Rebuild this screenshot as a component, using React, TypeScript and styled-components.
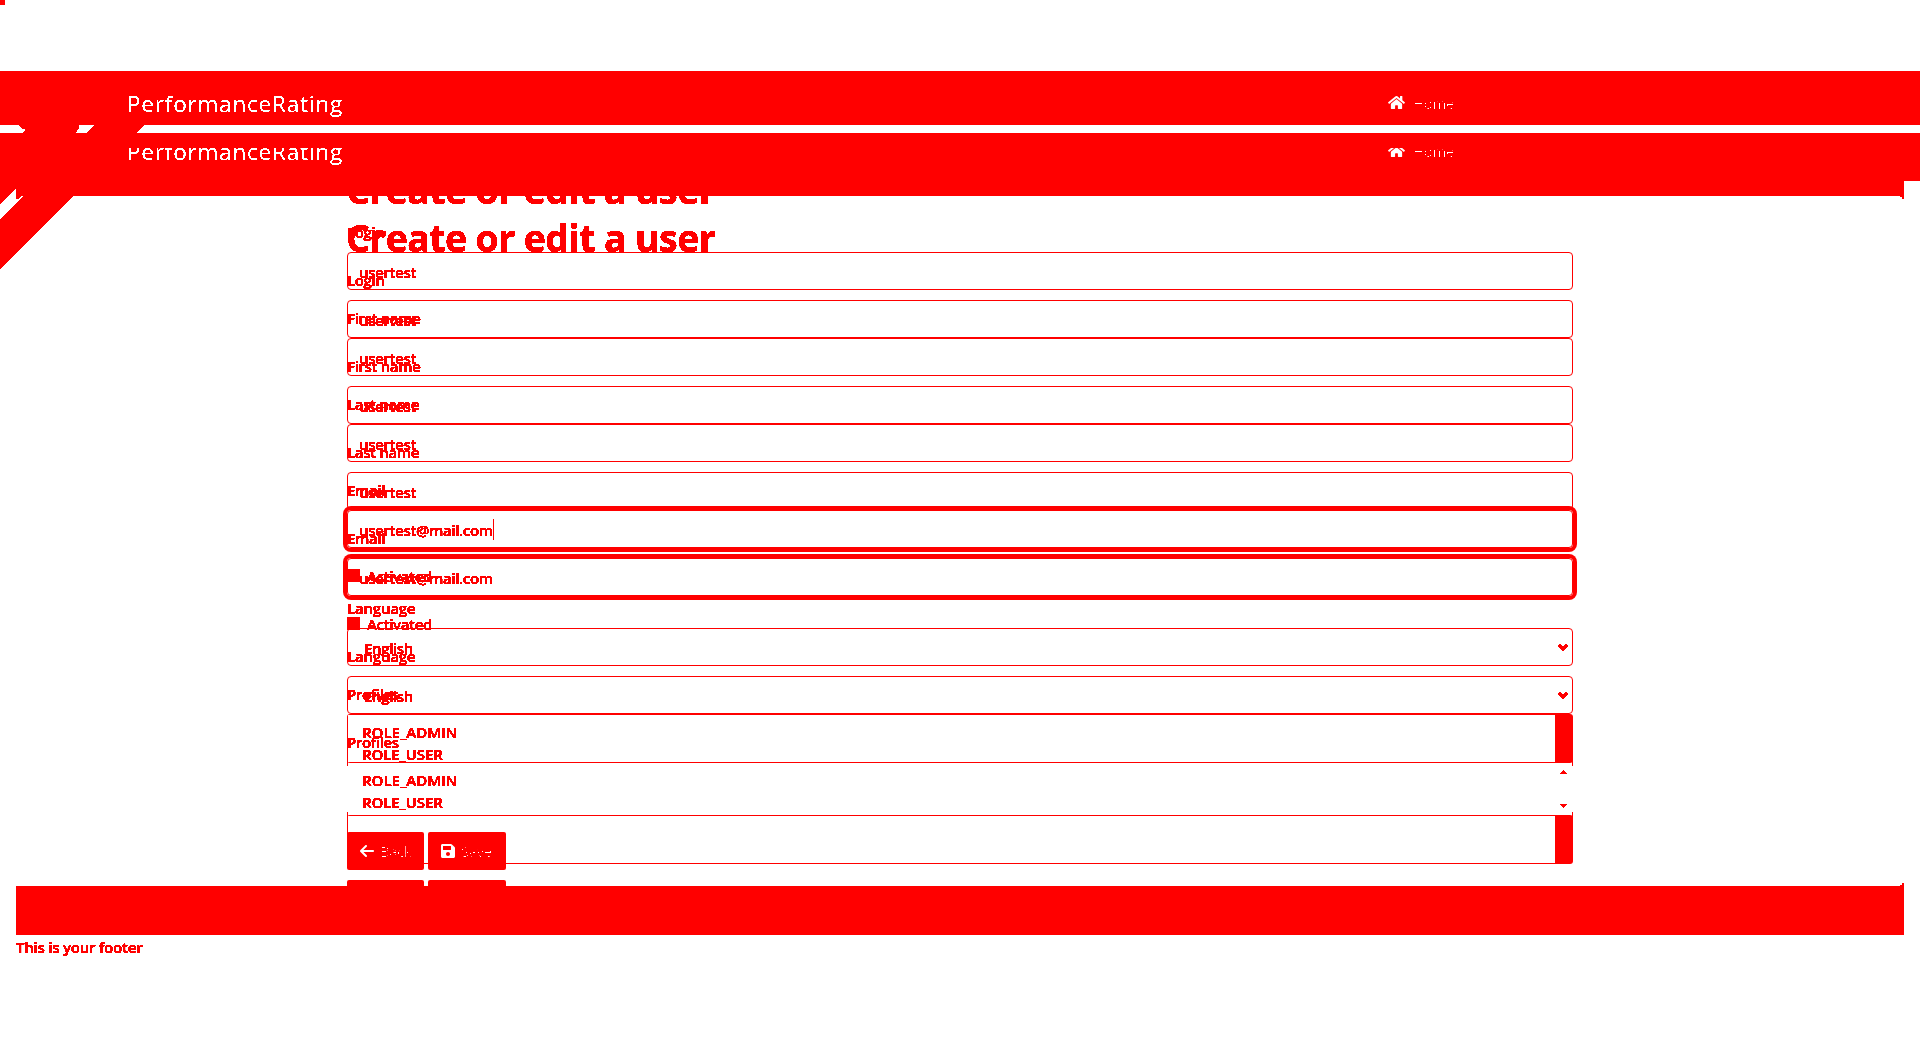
import React from 'react';
import styled, { createGlobalStyle } from 'styled-components';
import { FaHome, FaSave } from 'react-icons/fa';
import { FaArrowLeft } from 'react-icons/fa6';

const red = '#ff0000';

const GlobalStyle = createGlobalStyle`
  * { box-sizing: border-box; }
  body { margin: 0; background: #fff; }
`;

const Page = styled.div`
  position: relative;
  width: 1920px;
  height: 1040px;
  overflow: hidden;
  display: flex;
  flex-direction: column;
  background: #fff;
  color: ${red};
  font: 600 15px/24px 'Open Sans', 'Noto Sans', sans-serif;
`;

const TopSpace = styled.div`
  height: 71px;
  flex: none;
`;

const Marker = styled.div`
  width: 5px;
  height: 5px;
  background: ${red};
`;

const Band = styled.header<{ $height: number; $gap: number; $lift: number }>`
  flex: none;
  height: ${(p) => p.$height}px;
  margin-bottom: ${(p) => p.$gap}px;
  padding: ${(p) => p.$lift}px 460px 0 127px;
  display: flex;
  justify-content: space-between;
  align-items: flex-start;
  background: ${red};
  color: #fff;
`;

const Clip = styled.div<{ $cut: number }>`
  display: flex;
  width: 100%;
  justify-content: space-between;
  clip-path: inset(${(p) => p.$cut}px 0 0 0);
`;

const Brand = styled.span`
  font-size: 22.5px;
  line-height: 32px;
  font-weight: 500;
  letter-spacing: 0.8px;
  filter: url(#thin);
`;

const HomeLink = styled.a`
  display: flex;
  align-items: center;
  gap: 8px;
  height: 28px;
  width: 72px;
  font-size: 15px;
  font-weight: 400;
  letter-spacing: -0.3px;
  svg { width: 17px; height: 15px; flex: none; }
`;

const HomeText = styled.span`
  padding-top: 1px;
  filter: url(#faint);
`;

const CardEdge = styled.div<{ $height: number; $side: 'top' | 'bottom' }>`
  flex: none;
  position: relative;
  height: ${(p) => p.$height}px;
  margin: 0 16px;
  background: ${red};
  &::before, &::after {
    content: '';
    position: absolute;
    right: 0;
    ${(p) => (p.$side === 'top' ? 'top: 100%' : 'bottom: 100%')};
    width: 2px;
    height: 3px;
    background: ${red};
  }
  &::before {
    width: 4px;
    height: 1px;
  }
`;

const Stage = styled.main`
  flex: none;
  height: 690px;
  overflow: hidden;
  display: grid;
  grid-template-columns: 1226px;
  justify-content: center;
  align-items: start;
`;

const Sheet = styled.form<{ $top: number }>`
  grid-area: 1 / 1;
  margin-top: ${(p) => p.$top}px;
  display: flex;
  flex-direction: column;
`;

const Title = styled.h1`
  height: 48px;
  margin: 0 0 8px;
  padding-top: 2px;
  font-size: 37.5px;
  line-height: 48px;
  font-weight: 700;
  letter-spacing: -0.62px;
  text-indent: -1px;
  clip-path: inset(0 0 0 -4px);
  filter: url(#bold);
`;

const Group = styled.div`
  display: flex;
  flex-direction: column;
  gap: 8px;
  margin-bottom: 16px;
`;

const Text = styled.span<{ $spacing?: number }>`
  letter-spacing: ${(p) => p.$spacing ?? -0.35}px;
  white-space: pre;
  filter: url(#bold);
`;

const Label = styled.label`
  height: 24px;
  display: flex;
`;

const Field = styled.div<{ $focus?: boolean; $indent?: number }>`
  height: 38px;
  display: flex;
  align-items: center;
  padding: 1px 4px 0 ${(p) => p.$indent ?? 11}px;
  border: 1px solid ${red};
  border-radius: 4px;
  box-shadow: ${(p) => (p.$focus ? `0 0 0 4px ${red}` : 'none')};
`;

const Caret = styled.i`
  width: 1px;
  height: 21px;
  margin-top: -1px;
  background: ${red};
`;

const Chevron = styled.svg`
  width: 10px;
  height: 7px;
  margin: -1px 0 0 auto;
`;

const CheckRow = styled.label`
  display: flex;
  align-items: center;
  gap: 7px;
  height: 24px;
  margin-bottom: 8px;
`;

const Box = styled.span`
  width: 13px;
  height: 13px;
  margin-top: -1px;
  background: ${red};
`;

const List = styled.div<{ $lower: boolean }>`
  height: 102px;
  display: flex;
  justify-content: space-between;
  padding: 5px 6px 0 15px;
  border-radius: 3px;
  background-image: linear-gradient(${red}, ${red}), linear-gradient(${red}, ${red}),
    linear-gradient(${red}, ${red}), linear-gradient(${red}, ${red}), linear-gradient(${red}, ${red});
  background-repeat: no-repeat;
  background-size: 100% 1px, 100% 1px, 1px 52px, 1px 52px, 17px 48px;
  background-position: 0 0, 0 100%,
    ${(p) => (p.$lower ? '0 100%, 100% 100%, 1208px 100%' : '0 0, 100% 0, 1208px 0')};
`;

const Options = styled.div`
  display: flex;
  flex-direction: column;
  line-height: 22px;
  padding-top: 2px;
`;

const Arrows = styled.div`
  width: 7px;
  height: 38px;
  margin-top: 3px;
  display: flex;
  flex-direction: column;
  justify-content: space-between;
`;

const Arrow = styled.svg`
  width: 7px;
  height: 4px;
`;

const Actions = styled.div`
  display: flex;
  gap: 4px;
`;

const Button = styled.div<{ $width: number }>`
  width: ${(p) => p.$width}px;
  height: 38px;
  padding-left: 13px;
  display: flex;
  align-items: center;
  gap: 6px;
  border-radius: 2px;
  background: ${red};
  color: #fff;
  font-weight: 400;
  svg { width: 14px; height: 16px; flex: none; }
`;

const ButtonText = styled.span`
  letter-spacing: -0.5px;
  filter: url(#faint);
`;

const Footer = styled.footer`
  padding: 0 16px;
  display: flex;
`;

const Ribbon = styled.svg`
  position: absolute;
  left: 0;
  top: 120px;
  width: 150px;
  height: 150px;
`;

function Nav({ height, gap, lift, cut }: { height: number; gap: number; lift: number; cut: number }) {
  return (
    <Band $height={height} $gap={gap} $lift={lift}>
      <Clip $cut={cut}>
        <Brand>PerformanceRating</Brand>
        <HomeLink>
          <FaHome />
          <HomeText>Home</HomeText>
        </HomeLink>
      </Clip>
    </Band>
  );
}

function TextGroup({ label, value, focus, caret }: { label: string; value: string; focus?: boolean; caret?: boolean }) {
  return (
    <Group>
      <Label><Text>{label}</Text></Label>
      <Field $focus={focus}>
        <Text>{value}</Text>
        {caret && <Caret />}
      </Field>
    </Group>
  );
}

function UserForm({ top, lower }: { top: number; lower: boolean }) {
  return (
    <Sheet $top={top}>
      <Title>Create or edit a user</Title>
      <TextGroup label="Login" value="usertest" />
      <TextGroup label="First name" value="usertest" />
      <TextGroup label="Last name" value="usertest" />
      <TextGroup label="Email" value="usertest@mail.com" focus caret={!lower} />
      <CheckRow><Box /><Text>Activated</Text></CheckRow>
      <Group>
        <Label><Text $spacing={-0.2}>Language</Text></Label>
        <Field $indent={16}>
          <Text>English</Text>
          <Chevron viewBox="0 0 10 7"><path d="M0 1h1V0h2v1h1v1h2V1h1V0h2v1h1v2H9v1H8v1H7v1H6v1H4V6H3V5H2V4H1V3H0z" fill={red} /></Chevron>
        </Field>
      </Group>
      <Group>
        <Label><Text>Profiles</Text></Label>
        <List $lower={lower}>
          <Options>
            <Text $spacing={0}>ROLE_ADMIN</Text>
            <Text $spacing={-0.1}>ROLE_USER</Text>
          </Options>
          {lower && (
            <Arrows>
              <Arrow viewBox="0 0 7 4"><path d="M0 4V3h1V2h1V1h1V0h1v1h1v1h1v1h1v1z" fill={red} /></Arrow>
              <Arrow viewBox="0 0 7 4"><path d="M0 0v1h1v1h1v1h1v1h1V3h1V2h1V1h1V0z" fill={red} /></Arrow>
            </Arrows>
          )}
        </List>
      </Group>
      <Actions>
        <Button $width={77}><FaArrowLeft /><ButtonText>Back</ButtonText></Button>
        <Button $width={78}><FaSave /><ButtonText>Save</ButtonText></Button>
      </Actions>
    </Sheet>
  );
}

function Filter({ id, slope, cut }: { id: string; slope: number; cut: number }) {
  return (
    <filter id={id} x="-5%" y="-10%" width="110%" height="120%" colorInterpolationFilters="sRGB">
      <feComponentTransfer><feFuncA type="linear" slope={slope} intercept={-slope * cut} /></feComponentTransfer>
    </filter>
  );
}

export default function App() {
  return (
    <Page>
      <GlobalStyle />
      <TopSpace><Marker /></TopSpace>
      <Nav height={54} gap={8} lift={17} cut={7} />
      <Nav height={48} gap={0} lift={3} cut={12} />
      <CardEdge $height={15} $side="top" />
      <Stage>
        <UserForm top={16} lower />
        <UserForm top={-32} lower={false} />
      </Stage>
      <CardEdge $height={49} $side="bottom" />
      <Footer><Text $spacing={-0.22}>This is your footer</Text></Footer>
      <Ribbon viewBox="0 120 150 150" shapeRendering="crispEdges">
        <defs>
          <Filter id="bold" slope={30} cut={0.12} />
          <Filter id="thin" slope={30} cut={0.42} />
          <Filter id="faint" slope={40} cut={0.96} />
        </defs>
        <path d="M18 125H79V128L76 133H22L25 130V129H22L20 127ZM94 125H144L137 133H87Z" fill={red} />
        <path d="M0 181H16V189L0 204ZM23 196H73L0 269V219ZM16 196H22L20 197L18 199H16Z" fill={red} />
        <path d="M16 883h2v2h2v1h-4z" fill={red} />
      </Ribbon>
    </Page>
  );
}
